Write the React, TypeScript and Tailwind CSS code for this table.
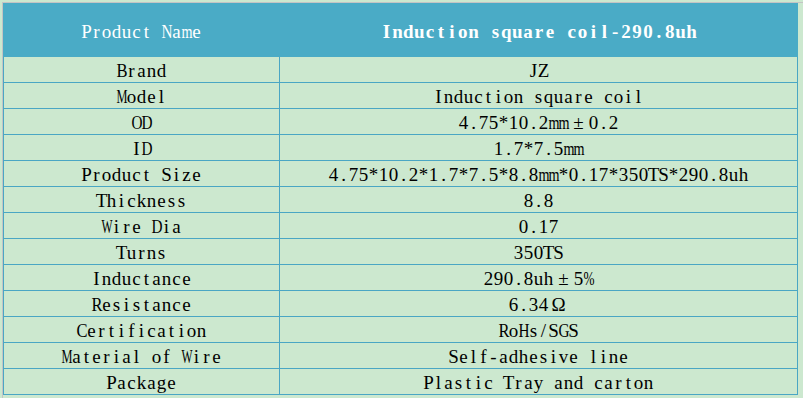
import type { ReactNode } from "react";

// Times advance widths (per 1000 em) for glyphs wider than a half-width cell
const WIDE: Record<string, number> = {
  A: 722, B: 667, C: 667, D: 722, G: 722, H: 722, K: 722, M: 889, N: 722,
  O: 722, Q: 722, R: 667, U: 722, V: 722, W: 944, X: 722, Y: 722,
  m: 778, w: 722, "%": 833,
};
const FULL = new Set(["±", "Ω"]);

// SimSun-like cells: every half-width char gets the same box
const Mono = ({ text, cell = 10, fit = 580 }: { text: string; cell?: number; fit?: number }) => (
  <>
    {Array.from(text).map((ch, i) => {
      if (FULL.has(ch)) {
        return (
          <span key={i} className="inline-flex justify-center w-[20px]">
            {ch}
          </span>
        );
      }
      const w = WIDE[ch];
      const sx = w && w > fit ? fit / w : 1;
      return (
        <span
          key={i}
          className="inline-flex justify-center whitespace-pre"
          style={{ width: cell, transform: sx < 1 ? `scaleX(${sx})` : undefined }}
        >
          {ch}
        </span>
      );
    })}
  </>
);

const ROWS: [string, string][] = [
  ["Brand", "JZ"],
  ["Model", "Induction square coil"],
  ["OD", "4.75*10.2mm±0.2"],
  ["ID", "1.7*7.5mm"],
  ["Product Size", "4.75*10.2*1.7*7.5*8.8mm*0.17*350TS*290.8uh"],
  ["Thickness", "8.8"],
  ["Wire Dia", "0.17"],
  ["Turns", "350TS"],
  ["Inductance", "290.8uh±5%"],
  ["Resistance", "6.34Ω"],
  ["Certification", "RoHs/SGS"],
  ["Material of Wire", "Self-adhesive line"],
  ["Package", "Plastic Tray and carton"],
];

const Cell = ({ children, className }: { children: ReactNode; className?: string }) => (
  <div className={`flex items-center justify-center whitespace-nowrap leading-none pt-[2px] ${className ?? ""}`}>
    {children}
  </div>
);

const App = () => {
  return (
    <div className="w-[803px] h-[398px] overflow-hidden bg-[#cce8cf] pt-[2px] pl-[2px]">
      <div className="border-t border-l border-[#c4c4c4] h-full">
        <div
          className="w-[795px] text-[19px] text-black"
          style={{ fontFamily: '"Liberation Serif", "Noto Sans CJK SC", serif' }}
        >
          <div className="flex h-[54px] bg-[#4aabc6] text-white">
            <Cell className="w-[277px]">
              <Mono text="Product Name" />
            </Cell>
            <Cell className="flex-1 font-bold">
              <Mono text="Induction square coil-290.8uh" cell={10.9} fit={620} />
            </Cell>
          </div>
          {ROWS.map(([label, value]) => (
            <div key={label} className="flex h-[26px] border-b border-l border-r border-[#4aa6c4]">
              <Cell className="w-[276px] border-r border-[#4aa6c4]">
                <Mono text={label} />
              </Cell>
              <Cell className="flex-1">
                <Mono text={value} />
              </Cell>
            </div>
          ))}
        </div>
      </div>
    </div>
  );
};

export default App;
